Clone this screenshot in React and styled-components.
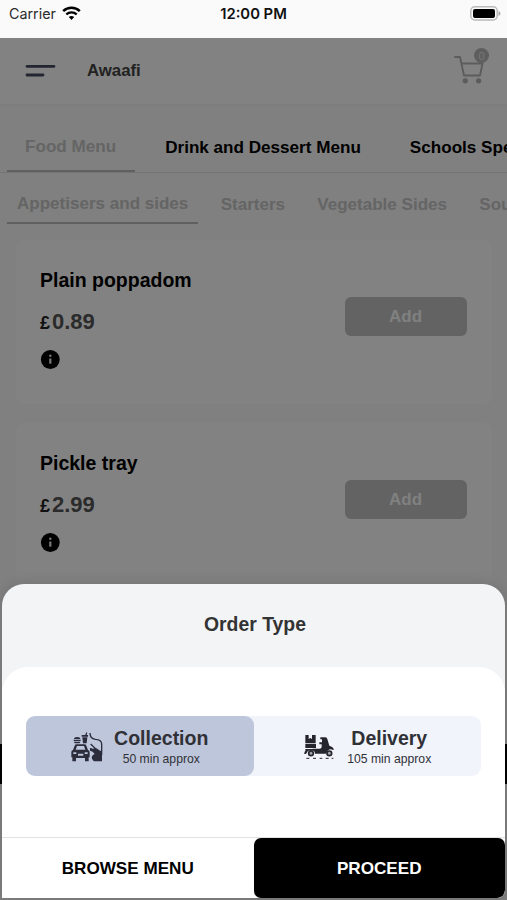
import React, { useState } from "react";
import styled, { createGlobalStyle } from "styled-components";

const GlobalStyle = createGlobalStyle`
  * {
    box-sizing: border-box;
  }

  body {
    margin: 0;
    overflow: hidden;
    font-family: "Liberation Sans", Arial, sans-serif;
  }

  button {
    border: none;
    padding: 0;
    font-family: inherit;
    cursor: pointer;
  }
`;

const Screen = styled.div`
  position: relative;
  width: 507px;
  height: 900px;
  overflow: hidden;
  background: #fbfbfb;
`;

const StatusBar = styled.div`
  display: grid;
  grid-template-columns: 1fr auto 1fr;
  align-items: center;
  height: 38px;
  padding: 0 6px 11px 9px;
  background: #fafafa;
  color: #111;
  font-family: Inter, sans-serif;
`;

const Carrier = styled.div`
  display: flex;
  align-items: center;
  gap: 6px;
  font-size: 14.3px;
  color: #2a2a2a;
`;

const Clock = styled.div`
  margin-right: 3px;
  font-size: 14.8px;
  font-weight: 600;
`;

const Battery = styled.svg`
  justify-self: end;
`;

const Header = styled.header`
  display: flex;
  align-items: center;
  height: 66px;
  padding: 0 18px 0 25px;
  background: #fff;
  box-shadow: 0 1px 4px rgba(0, 0, 0, 0.04);
`;

const Brand = styled.h1`
  flex: 1;
  margin: 0 0 0 31px;
  font-size: 16.8px;
  color: #444;
`;

const CartWrap = styled.div`
  position: relative;
  width: 35px;
  height: 48px;
  padding-top: 8px;
`;

const CartCount = styled.span`
  position: absolute;
  top: 1px;
  left: 20px;
  width: 15px;
  height: 15px;
  border-radius: 50%;
  background: #b8b8b8;
  color: #e6e6e6;
  font-size: 11px;
  line-height: 16px;
  text-align: center;
`;

const MenuTabs = styled.nav`
  display: flex;
  height: 69px;
  padding: 0 0 0 7px;
  border-bottom: 1px solid #e2e2e2;
`;

const MenuTab = styled.button`
  flex: none;
  height: 68px;
  padding: ${(props) => (props.$active ? "20px 19px 0 18px" : "22px 19px 0 30px")};
  border-bottom: 2px solid ${(props) => (props.$active ? "#bdbdbd" : "transparent")};
  background: none;
  color: ${(props) => (props.$active ? "#c6c6c6" : "#000")};
  font-size: 17.1px;
  font-weight: bold;
  line-height: 22px;
  white-space: nowrap;
`;

const CategoryTabs = styled.nav`
  display: flex;
  height: 51px;
  padding-left: 7px;
`;

const CategoryTab = styled.button`
  flex: none;
  height: 51px;
  padding: ${(props) => (props.$active ? "12px 10px 0" : "14px 10px 0 22.3px")};
  border-bottom: 2px solid ${(props) => (props.$active ? "#bdbdbd" : "transparent")};
  background: none;
  color: #c6c6c6;
  font-size: 17.05px;
  font-weight: bold;
  line-height: 22px;
  white-space: nowrap;
`;

const ItemList = styled.main`
  display: flex;
  flex-direction: column;
  gap: 19px;
  padding: 16px 15px 0 16px;
`;

const ItemCard = styled.article`
  display: flex;
  justify-content: space-between;
  height: 164px;
  padding: 29px 25.5px 0 24px;
  border-radius: 8px;
  background: #fff;
`;

const ItemName = styled.h2`
  margin: 0;
  font-size: 19.5px;
  line-height: 22px;
`;

const Price = styled.p`
  margin: 18px 0 13px;
  color: #555;
  font-size: 22px;
  font-weight: bold;
  line-height: 26px;
`;

const Pound = styled.span`
  display: inline-block;
  width: 11px;
  margin-right: 1px;
  color: #222;
  font-size: 18px;
`;

const InfoIcon = styled.svg`
  display: block;
`;

const AddButton = styled.button`
  width: 122px;
  height: 39px;
  margin-top: 28px;
  border-radius: 6px;
  background: #c2c2c2;
  color: #fbfbfb;
  font-size: 17px;
  font-weight: bold;
`;

const BasketBar = styled.div`
  position: absolute;
  top: 744px;
  left: 0;
  width: 100%;
  height: 40px;
  background: #000;
`;

const Backdrop = styled.div`
  position: absolute;
  top: 38px;
  right: 0;
  bottom: 0;
  left: 0;
  background: rgba(0, 0, 0, 0.49);
`;

const Sheet = styled.section`
  position: absolute;
  top: 584px;
  left: 2px;
  display: flex;
  flex-direction: column;
  width: 503px;
  height: 314px;
  border-radius: 22px 22px 8px 0;
  background: #f3f4f6;
  box-shadow: 0 0 14px rgba(0, 0, 0, 0.12);
  overflow: hidden;
`;

const SheetTitle = styled.h3`
  margin: 0;
  height: 83px;
  padding-left: 3px;
  color: #333;
  font-size: 19.4px;
  line-height: 80px;
  text-align: center;
`;

const SheetBody = styled.div`
  flex: 1;
  padding: 49px 24px 0;
  border-radius: 26px 26px 0 0;
  background: #fff;
`;

const OrderTypes = styled.div`
  display: flex;
  height: 60px;
  border-radius: 9px;
  background: #f2f4fc;
`;

const OrderOption = styled.button`
  display: flex;
  align-items: center;
  justify-content: center;
  flex: 1;
  gap: ${(props) => props.$gap}px;
  padding-top: 2px;
  border-radius: 9px;
  background: ${(props) => (props.$selected ? "#bec6dc" : "transparent")};
  color: #303136;
`;

const OptionText = styled.span`
  display: flex;
  flex-direction: column;
  align-items: center;
`;

const OptionName = styled.span`
  font-size: 19.5px;
  font-weight: bold;
  line-height: 22px;
`;

const OptionTime = styled.span`
  margin-top: 2px;
  font-size: 12.2px;
  line-height: 16px;
`;

const Actions = styled.footer`
  display: flex;
  height: 61px;
  border-top: 1px solid #e2e2e2;
  background: #fff;
`;

const ActionButton = styled.button`
  flex: 1;
  padding-top: 2px;
  border-radius: 7px;
  background: ${(props) => (props.$primary ? "#000" : "#fff")};
  color: ${(props) => (props.$primary ? "#fff" : "#000")};
  font-size: 17.1px;
  font-weight: bold;
`;

const WifiIcon = () => (
  <svg width="19" height="15" viewBox="0 0 19 15" fill="none" stroke="#000">
    <path d="M1.2 5.2C5.8.7 13.2.7 17.8 5.2" strokeWidth="2.5" />
    <path d="M4.3 8.4c2.9-2.7 7.5-2.7 10.4 0" strokeWidth="2.3" />
    <path d="M6.8 11.1c1.6-1.4 3.8-1.4 5.4 0L9.5 14z" fill="#000" stroke="none" />
  </svg>
);

const BatteryIcon = () => (
  <Battery width="31" height="15" viewBox="0 0 31 15">
    <rect x=".8" y=".8" width="26.4" height="13.2" rx="4" fill="#fafafa" stroke="#bbb" strokeWidth="1.5" />
    <rect x="3" y="3" width="22" height="9" rx="2" fill="#000" />
    <path d="M28.5 5c2.6.8 2.6 4.2 0 5z" fill="#aaa" />
  </Battery>
);

const MenuIcon = () => (
  <svg width="31" height="14" viewBox="0 0 31 14" stroke="#464960" strokeWidth="2.8" strokeLinecap="round">
    <path d="M2 2.3h27M2 11h16" />
  </svg>
);

const CartIcon = () => (
  <svg width="30" height="29" viewBox="0 0 30 29" fill="none" stroke="#b4b4b4" strokeWidth="1.9" strokeLinecap="round" strokeLinejoin="round">
    <path d="M1 2h5l4 18.5h16l2.5-12H7.6" />
    <circle cx="11.3" cy="25.8" r="1.7" fill="#b4b4b4" />
    <circle cx="24.6" cy="25.8" r="1.7" fill="#b4b4b4" />
  </svg>
);

const CollectionIcon = () => (
  <svg width="32" height="30" viewBox="35 20 96 90" fill="#2b2d3c">
    <path d="M44 41q0-6 9.500-6t9.500 6zM43 43h21v4H43zM44 49h19q0 5-4 5H48q-4 0-4-5z" />
    <path d="M67 29h19v5H67zM69 36h15l-2 18H71zM77 30l4-9 3 1-3 9z" />
    <path
      d="M41 74l5-13q1-4 6-4h23q5 0 6 4l5 13q5 1 5 7v15h-3v12H77V98H50v10H39V96h-3V81q0-6 5-7zm8-1h29l-4-11H53zM42 81v5h9v-5zm34 0v5h9v-5zM56 85v6h16v-6z"
      fillRule="evenodd"
    />
    <path d="M92 23q0 17 16 19 19 1 19 14v33M94 56l13 13 9 5 9 12" fill="none" stroke="#2b2d3c" strokeWidth="4" />
    <path d="M92 68q6-1 8 3l7-4 8 7 13 4v30H104q-9-7-6-15 2-5 8-7l-6-7-8-3z" />
  </svg>
);

const DeliveryIcon = () => (
  <svg width="31" height="27" viewBox="23 28 93 81" fill="#25262d">
    <path d="M30 31h10v12l5-3 5 3V31h11v25H30zM30 58h32v12H30zM30 73h33v5H30zM27 84q2-9 13-9l-8 13h-5z" />
    <path d="M75 38h15q5 0 6 5l6 20q10 2 14 11l-3 2q-13-7-21 11H59q-1-11-9-12l2-3h22q5-1 5-5V59h-7v-6h8v-9h-5z" />
    <circle cx="47" cy="86" r="7" fill="#a3a4aa" stroke="#25262d" strokeWidth="5" />
    <circle cx="102" cy="86" r="7" fill="#a3a4aa" stroke="#25262d" strokeWidth="5" />
    <path d="M33 101h9m11 0h9m11 0h8m10 0h9m9 0h5" stroke="#25262d" strokeWidth="3" />
  </svg>
);

const menus = ["Food Menu", "Drink and Dessert Menu", "Schools Special"];
const categories = ["Appetisers and sides", "Starters", "Vegetable Sides", "Soups"];
const items = [
  { name: "Plain poppadom", price: "0.89" },
  { name: "Pickle tray", price: "2.99" },
];

const MenuItem = ({ item }) => (
  <ItemCard>
    <div>
      <ItemName>{item.name}</ItemName>
      <Price>
        <Pound>£</Pound>
        {item.price}
      </Price>
      <InfoIcon width="20" height="20" viewBox="0 0 20 20">
        <circle cx="10.3" cy="10.5" r="9.4" fill="#000" />
        <path d="M10.3 9.5v5.2" stroke="#eee" strokeWidth="2.2" />
        <circle cx="10.3" cy="6.7" r="1.2" fill="#eee" />
      </InfoIcon>
    </div>
    <AddButton>Add</AddButton>
  </ItemCard>
);

export default function App() {
  const [orderType, setOrderType] = useState("collection");

  return (
    <>
      <GlobalStyle />
      <Screen>
        <StatusBar>
          <Carrier>
            Carrier
            <WifiIcon />
          </Carrier>
          <Clock>12:00 PM</Clock>
          <BatteryIcon />
        </StatusBar>
        <Header>
          <MenuIcon />
          <Brand>Awaafi</Brand>
          <CartWrap>
            <CartIcon />
            <CartCount>0</CartCount>
          </CartWrap>
        </Header>
        <MenuTabs>
          {menus.map((menu, i) => (
            <MenuTab key={menu} $active={i === 0}>
              {menu}
            </MenuTab>
          ))}
        </MenuTabs>
        <CategoryTabs>
          {categories.map((category, i) => (
            <CategoryTab key={category} $active={i === 0}>
              {category}
            </CategoryTab>
          ))}
        </CategoryTabs>
        <ItemList>
          {items.map((item) => (
            <MenuItem key={item.name} item={item} />
          ))}
        </ItemList>
        <BasketBar />
        <Backdrop />
        <Sheet>
          <SheetTitle>Order Type</SheetTitle>
          <SheetBody>
            <OrderTypes>
              <OrderOption
                $gap={11}
                $selected={orderType === "collection"}
                onClick={() => setOrderType("collection")}
              >
                <CollectionIcon />
                <OptionText>
                  <OptionName>Collection</OptionName>
                  <OptionTime>50 min approx</OptionTime>
                </OptionText>
              </OrderOption>
              <OrderOption
                $gap={13}
                $selected={orderType === "delivery"}
                onClick={() => setOrderType("delivery")}
              >
                <DeliveryIcon />
                <OptionText>
                  <OptionName>Delivery</OptionName>
                  <OptionTime>105 min approx</OptionTime>
                </OptionText>
              </OrderOption>
            </OrderTypes>
          </SheetBody>
          <Actions>
            <ActionButton>BROWSE MENU</ActionButton>
            <ActionButton $primary>PROCEED</ActionButton>
          </Actions>
        </Sheet>
      </Screen>
    </>
  );
}
